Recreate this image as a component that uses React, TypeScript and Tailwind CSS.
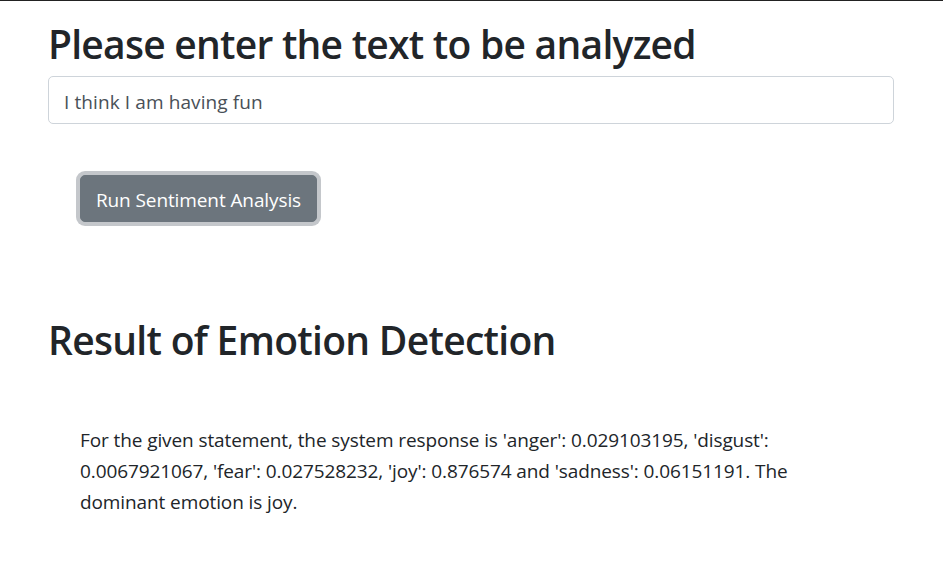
export default function App() {
  return (
    <div
      className="min-h-[575px] bg-white border-t border-[#222] text-[#212529]"
      style={{ fontFamily: '"Open Sans", "Noto Sans", sans-serif' }}
    >
      <div className="w-[846px] ml-[48px] pt-[19px]">
        <h1 className="text-[39px] leading-[48px] font-semibold tracking-[-0.75px] mb-[8px]">
          Please enter the text to be analyzed
        </h1>
        <input
          type="text"
          defaultValue="I think I am having fun"
          className="block w-full h-[48px] pl-[15px] pr-4 pt-[3px] text-[19px] tracking-[0.1px] text-[#495057] border border-[#ced4da] rounded-[5px] outline-none"
        />

        <div className="pl-[32px] pt-[51px]">
          <button className="h-[47px] w-[237px] pt-[3px] text-[19px] tracking-[-0.1px] text-white bg-[#6c757d] border border-[#6c757d] rounded-[5px] shadow-[0_0_0_4px_#c4c7cb]">
            Run Sentiment Analysis
          </button>
        </div>

        <h2 className="mt-[94px] text-[39px] leading-[48px] font-semibold tracking-[-0.7px]">
          Result of Emotion Detection
        </h2>

        <p className="mt-[61px] pl-[32px] pr-[50px] text-[19px] leading-[31px] tracking-[-0.1px]">
          For the given statement, the system response is 'anger': 0.029103195, 'disgust': 0.0067921067, 'fear': 0.027528232, 'joy': 0.876574 and 'sadness': 0.06151191. The dominant emotion is joy.
        </p>
      </div>
    </div>
  );
}
